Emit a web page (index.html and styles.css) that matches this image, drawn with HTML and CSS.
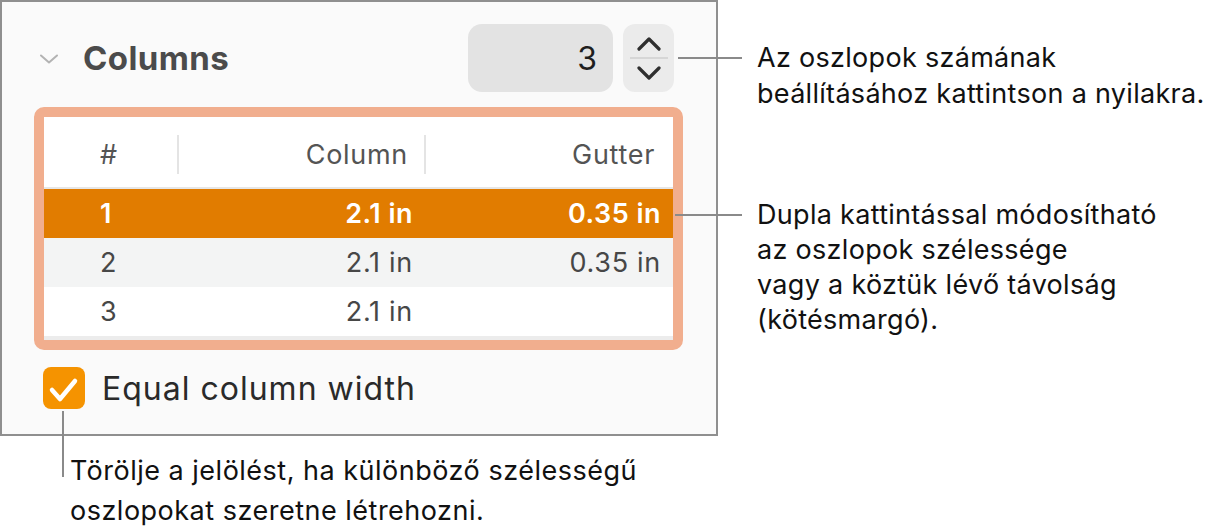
FILE: index.html
```html
<!DOCTYPE html>
<html lang="hu">
<head>
<meta charset="utf-8">
<title>Columns</title>
<link rel="stylesheet" href="styles.css">
</head>
<body>
<div class="page">
  <div class="left">
    <section class="panel">
      <div class="panel-head">
        <svg class="disclosure" width="18" height="10" viewBox="0 0 18 10"><path d="M1 1.5 L9 8.5 L17 1.5" fill="none" stroke="#b3b3b3" stroke-width="2" stroke-linecap="round" stroke-linejoin="round"/></svg>
        <h2 class="title">Columns</h2>
        <div class="count">3</div>
        <div class="stepper">
          <svg class="arrow" width="24" height="14" viewBox="0 0 24 14"><path d="M2 12 L12 2 L22 12" fill="none" stroke="#2f2f2f" stroke-width="3.2" stroke-linecap="round" stroke-linejoin="round"/></svg>
          <span class="stepper-sep"></span>
          <svg class="arrow" width="24" height="14" viewBox="0 0 24 14"><path d="M2 2 L12 12 L22 2" fill="none" stroke="#2f2f2f" stroke-width="3.2" stroke-linecap="round" stroke-linejoin="round"/></svg>
        </div>
      </div>
      <div class="highlight">
        <div class="table">
          <div class="row head">
            <div class="cell c1">#</div>
            <div class="cell c2">Column</div>
            <div class="cell c3">Gutter</div>
          </div>
          <div class="row sel">
            <div class="cell c1">1</div>
            <div class="cell c2">2.1 in</div>
            <div class="cell c3">0.35 in</div>
          </div>
          <div class="row alt">
            <div class="cell c1">2</div>
            <div class="cell c2">2.1 in</div>
            <div class="cell c3">0.35 in</div>
          </div>
          <div class="row">
            <div class="cell c1">3</div>
            <div class="cell c2">2.1 in</div>
            <div class="cell c3"></div>
          </div>
          <div class="table-foot"></div>
        </div>
      </div>
      <div class="check">
        <span class="box"><svg width="42" height="42" viewBox="0 0 42 42"><path d="M9 23 L17 32 L32 14" fill="none" stroke="#fff" stroke-width="4.5" stroke-linecap="round" stroke-linejoin="round"/></svg></span>
        <span class="check-label">Equal column width</span>
      </div>
    </section>
    <p class="note note-bottom">Törölje a jelölést, ha különböző szélességű<br>oszlopokat szeretne létrehozni.</p>
  </div>
  <div class="right">
    <p class="note note-stepper">Az oszlopok számának<br>beállításához kattintson a nyilakra.</p>
    <p class="note note-table">Dupla kattintással módosítható<br>az oszlopok szélessége<br>vagy a köztük lévő távolság<br>(kötésmargó).</p>
  </div>
</div>
</body>
</html>
```

FILE: styles.css
```css
* { box-sizing: border-box; }

html, body {
  margin: 0;
  padding: 0;
  background: #ffffff;
}

body {
  font-family: Inter, "Noto Sans", "Liberation Sans", sans-serif;
  color: #1d1d1f;
}

.page {
  width: 1218px;
  height: 529px;
  display: flex;
  align-items: flex-start;
}

.left {
  width: 718px;
  flex: none;
  display: flex;
  flex-direction: column;
}

.panel {
  width: 718px;
  height: 436px;
  border: 2px solid #8f8f8f;
  background: #fafafa;
  display: flex;
  flex-direction: column;
}

.panel-head {
  display: flex;
  align-items: center;
  height: 68px;
  margin-top: 22px;
  padding-left: 38px;
  padding-right: 42px;
}

.disclosure {
  flex: none;
  margin-top: 2px;
}

.title {
  margin: 0 0 0 25px;
  font-size: 33px;
  font-weight: 700;
  color: #4b4b4b;
  letter-spacing: 0.4px;
}

.count {
  margin-left: auto;
  width: 145px;
  height: 68px;
  border-radius: 14px;
  background: #e3e3e3;
  display: flex;
  align-items: center;
  justify-content: flex-end;
  padding-right: 16px;
  font-size: 32px;
  color: #1f1f1f;
}

.stepper {
  margin-left: 10px;
  width: 51px;
  height: 68px;
  border-radius: 12px;
  background: #ebebeb;
  display: flex;
  flex-direction: column;
  align-items: center;
  justify-content: center;
}

.stepper-sep {
  display: block;
  width: 38px;
  height: 2px;
  background: #d6d6d6;
  margin: 6px 0 7px;
}

.highlight {
  margin: 15px 0 0 32px;
  width: 649px;
  height: 243px;
  border: 10px solid #f1ae8e;
  border-radius: 10px;
  background: #f1ae8e;
}

.table {
  background: #ffffff;
  height: 100%;
  display: flex;
  flex-direction: column;
}

.row {
  display: grid;
  grid-template-columns: 133px 247px 249px;
  height: 49px;
  align-items: center;
  font-size: 27px;
  letter-spacing: 0.7px;
  color: #474747;
}

.cell {
  white-space: nowrap;
}

.c1 { padding-left: 56px; }
.c2 { text-align: right; padding-right: 11px; }
.c3 { text-align: right; padding-right: 12px; }

.row.head {
  height: 72px;
  padding: 18px 0 13px;
  align-items: stretch;
  border-bottom: 2px solid #e6e6e6;
  color: #545454;
}

.row.head .cell {
  display: flex;
  align-items: center;
}

.row.head .c2,
.row.head .c3 {
  justify-content: flex-end;
  border-left: 2px solid #e4e4e4;
  padding-right: 16px;
}

.row.head .c3 { padding-right: 18px; }

.row.sel {
  background: #e17c00;
  color: #ffffff;
  font-weight: 600;
  letter-spacing: 0.5px;
}

.row.alt {
  background: #f3f4f4;
}

.table-foot {
  flex: 1;
  background: #ffffff;
  border-bottom: 4px solid #ececec;
}

.check {
  margin: 17px 0 0 41px;
  display: flex;
  align-items: center;
}

.box {
  width: 42px;
  height: 42px;
  border-radius: 8px;
  background: #f59300;
  display: block;
  flex: none;
}

.box svg { display: block; }

.check-label {
  margin-left: 17px;
  font-size: 32px;
  letter-spacing: 1px;
  color: #2a2a2a;
}

.note {
  margin: 0;
  font-size: 27px;
  line-height: 36px;
  letter-spacing: 0.3px;
  color: #111111;
  position: relative;
  white-space: nowrap;
}

.note-bottom {
  margin: 15px 0 0 70px;
  line-height: 40px;
  letter-spacing: 0.5px;
}

.note-bottom::before {
  content: "";
  position: absolute;
  left: -8px;
  top: -40px;
  width: 2px;
  height: 66px;
  background: #8a8a8a;
}

.right {
  flex: 1;
  padding-left: 39px;
  display: flex;
  flex-direction: column;
}

.note-stepper {
  margin-top: 40px;
}

.note-stepper::before {
  content: "";
  position: absolute;
  left: -79px;
  top: 17px;
  width: 64px;
  height: 2px;
  background: #8a8a8a;
}

.note-table {
  margin-top: 85px;
  line-height: 35px;
}

.note-table::before {
  content: "";
  position: absolute;
  left: -82px;
  top: 17px;
  width: 67px;
  height: 2px;
  background: #8a8a8a;
}
```
